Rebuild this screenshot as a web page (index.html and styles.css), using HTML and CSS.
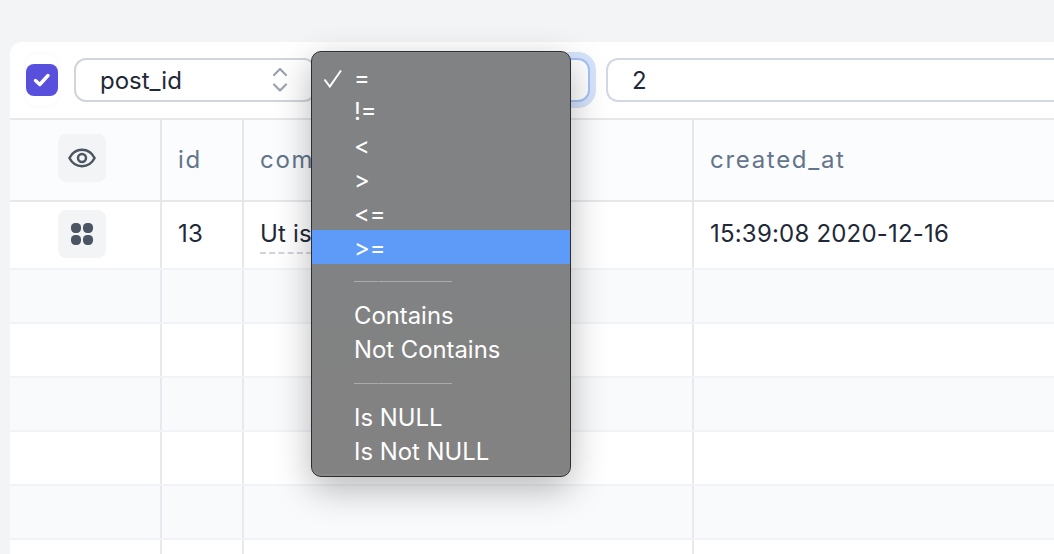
FILE: index.html
```html
<!DOCTYPE html>
<html lang="en">
<head>
<meta charset="utf-8">
<title>Filter</title>
<link rel="stylesheet" href="styles.css">
</head>
<body>
<main class="card">
  <div class="toolbar">
    <span class="check-wrap"><span class="check">
      <svg width="20" height="20" viewBox="0 0 20 20"><path d="M3.500 10.500 7.800 14.500 16 5.500" fill="none" stroke="#fff" stroke-width="3.400" stroke-linecap="round" stroke-linejoin="round"/></svg>
    </span></span>
    <div class="select field-col">
      <span>post_id</span>
      <svg class="updown" width="16" height="28" viewBox="0 0 16 28"><path d="M2 9 8 3l6 6M2 18.500l6 6 6-6" fill="none" stroke="#9ca3af" stroke-width="2.200" stroke-linecap="round" stroke-linejoin="round"/></svg>
    </div>
    <div class="select field-op"></div>
    <div class="select field-val"><span>2</span></div>
  </div>
  <div class="row head">
    <div class="cell c1"><span class="tile"><svg width="28" height="20" viewBox="0 0 28 20"><path d="M1.400 10C4.200 4.600 8.700 1.800 14 1.800s9.800 2.800 12.600 8.200C23.800 15.400 19.300 18.200 14 18.200S4.200 15.400 1.400 10Z" fill="none" stroke="#4b5563" stroke-width="2.500" stroke-linejoin="round"/><circle cx="14" cy="10" r="4" fill="none" stroke="#4b5563" stroke-width="2.500"/></svg></span></div>
    <div class="cell c2">id</div>
    <div class="cell c3">comment</div>
    <div class="cell c4">created_at</div>
  </div>
  <div class="row first">
    <div class="cell c1"><span class="tile"><svg width="24" height="24" viewBox="0 0 24 24" fill="#4b5563"><rect x="1" y="1" width="10" height="10" rx="4.200"/><rect x="13" y="1" width="10" height="10" rx="4.200"/><rect x="1" y="13" width="10" height="10" rx="4.200"/><rect x="13" y="13" width="10" height="10" rx="4.200"/></svg></span></div>
    <div class="cell c2">13</div>
    <div class="cell c3"><span class="dashed">Ut is</span></div>
    <div class="cell c4">15:39:08 2020-12-16</div>
  </div>
  <div class="row empty odd"><div class="cell c1"></div><div class="cell c2"></div><div class="cell c3"></div><div class="cell c4"></div></div>
  <div class="row empty"><div class="cell c1"></div><div class="cell c2"></div><div class="cell c3"></div><div class="cell c4"></div></div>
  <div class="row empty odd"><div class="cell c1"></div><div class="cell c2"></div><div class="cell c3"></div><div class="cell c4"></div></div>
  <div class="row empty"><div class="cell c1"></div><div class="cell c2"></div><div class="cell c3"></div><div class="cell c4"></div></div>
  <div class="row empty odd"><div class="cell c1"></div><div class="cell c2"></div><div class="cell c3"></div><div class="cell c4"></div></div>
  <div class="row empty"><div class="cell c1"></div><div class="cell c2"></div><div class="cell c3"></div><div class="cell c4"></div></div>
</main>
<div class="menu">
  <div class="item"><svg class="tick" width="20" height="20" viewBox="0 0 20 20"><path d="M1.500 10.500 6.800 17.500 18 1.500" fill="none" stroke="#fff" stroke-width="2"/></svg>=</div>
  <div class="item">!=</div>
  <div class="item">&lt;</div>
  <div class="item">&gt;</div>
  <div class="item">&lt;=</div>
  <div class="item active">&gt;=</div>
  <div class="item sep"><i></i></div>
  <div class="item">Contains</div>
  <div class="item">Not Contains</div>
  <div class="item sep"><i></i></div>
  <div class="item">Is NULL</div>
  <div class="item">Is Not NULL</div>
</div>
</body>
</html>
```
FILE: styles.css
```css
* { box-sizing: border-box; }
html, body { height: 100%; }
body {
  margin: 0;
  height: 554px;
  overflow: hidden;
  background: #f3f4f6;
  font-family: Inter, "Liberation Sans", sans-serif;
  color: #1f2937;
  padding: 42px 0 0 10px;
}
.card {
  width: 1044px;
  height: 512px;
  overflow: hidden;
  background: #fff;
  border-top-left-radius: 12px;
}
.toolbar {
  height: 78px;
  display: flex;
  align-items: center;
  padding: 0 0 0 16px;
  border-bottom: 2px solid #e5e7eb;
}
.check-wrap {
  width: 32px;
  height: 52px;
  display: flex;
  align-items: center;
  border-radius: 10px;
  box-shadow: 0 0 4px rgba(0, 0, 0, .04);
  margin-right: 16px;
}
.check {
  width: 32px;
  height: 32px;
  border-radius: 8px;
  background: #5850dc;
  display: flex;
  align-items: center;
  justify-content: center;
}
.select {
  flex: none;
  height: 44px;
  border: 2px solid #d1d5db;
  border-radius: 12px;
  background: #fff;
  display: flex;
  align-items: center;
  justify-content: space-between;
  padding: 0 26px 0 24px;
  font-size: 24px;
}
.field-col { width: 242px; margin-right: 16px; }
.field-op {
  width: 258px;
  margin-right: 16px;
  border-color: #a4c3f5;
  box-shadow: 0 0 0 6px #d6e4fb;
}
.field-val {
  flex: 1;
  border-color: #d4d8e4;
  border-right: 0;
  border-radius: 12px 0 0 12px;
}
.row { display: flex; }
.cell {
  height: 100%;
  display: flex;
  align-items: center;
  padding-left: 16px;
  border-right: 2px solid #e5e7eb;
  font-size: 24px;
  letter-spacing: .2px;
  white-space: nowrap;
  overflow: hidden;
}
.c1 { width: 152px; justify-content: center; padding: 0 6px 0 0; }
.c2 { width: 82px; }
.c3 { width: 450px; }
.c4 { flex: 1; border-right: 0; }
.head {
  height: 82px;
  background: #fbfcfe;
  border-bottom: 2px solid #e5e7eb;
}
.head .cell {
  color: #64748b;
  letter-spacing: 1.700px;
  padding-bottom: 2px;
}
.head .c1 { padding-bottom: 4px; }
.first { height: 66px; }
.first .cell { padding-bottom: 3px; }
.first .c1 { padding-bottom: 2px; }
.tile {
  width: 48px;
  height: 48px;
  border-radius: 8px;
  background: #f3f4f6;
  display: flex;
  align-items: center;
  justify-content: center;
}
.dashed {
  border-bottom: 2px dashed #d1d5db;
  padding-bottom: 4px;
  margin-top: 6px;
}
.empty { height: 52px; }
.empty .cell { border-right-color: #e8e8ee; }
.odd {
  height: 56px;
  background: #f8fafc;
  border-top: 2px solid #f1f3f7;
  border-bottom: 2px solid #f1f3f7;
}
.menu {
  position: absolute;
  left: 311px;
  top: 51px;
  width: 260px;
  height: 426px;
  padding: 8px 0 0;
  background: linear-gradient(#808284, #828282);
  border: 1px solid #2e2e2e;
  border-radius: 10px;
  box-shadow: 0 12px 36px rgba(0, 0, 0, .28), inset 0 1px 0 rgba(255, 255, 255, .06), inset 0 -2px 0 rgba(255, 255, 255, .06);
  color: #fff;
  font-family: Inter, "Liberation Sans", sans-serif;
  font-size: 23.850px;
}
.item {
  position: relative;
  height: 34px;
  line-height: 36px;
  padding-left: 42px;
}
.active { background: #5e9bf8; }
.tick { position: absolute; left: 11px; top: 9px; }
.sep { display: flex; align-items: center; }
.sep i {
  display: block;
  width: 98px;
  height: 1px;
  background: repeating-linear-gradient(90deg, #ababab 0 24px, #949494 24px 24.500px);
}
```
